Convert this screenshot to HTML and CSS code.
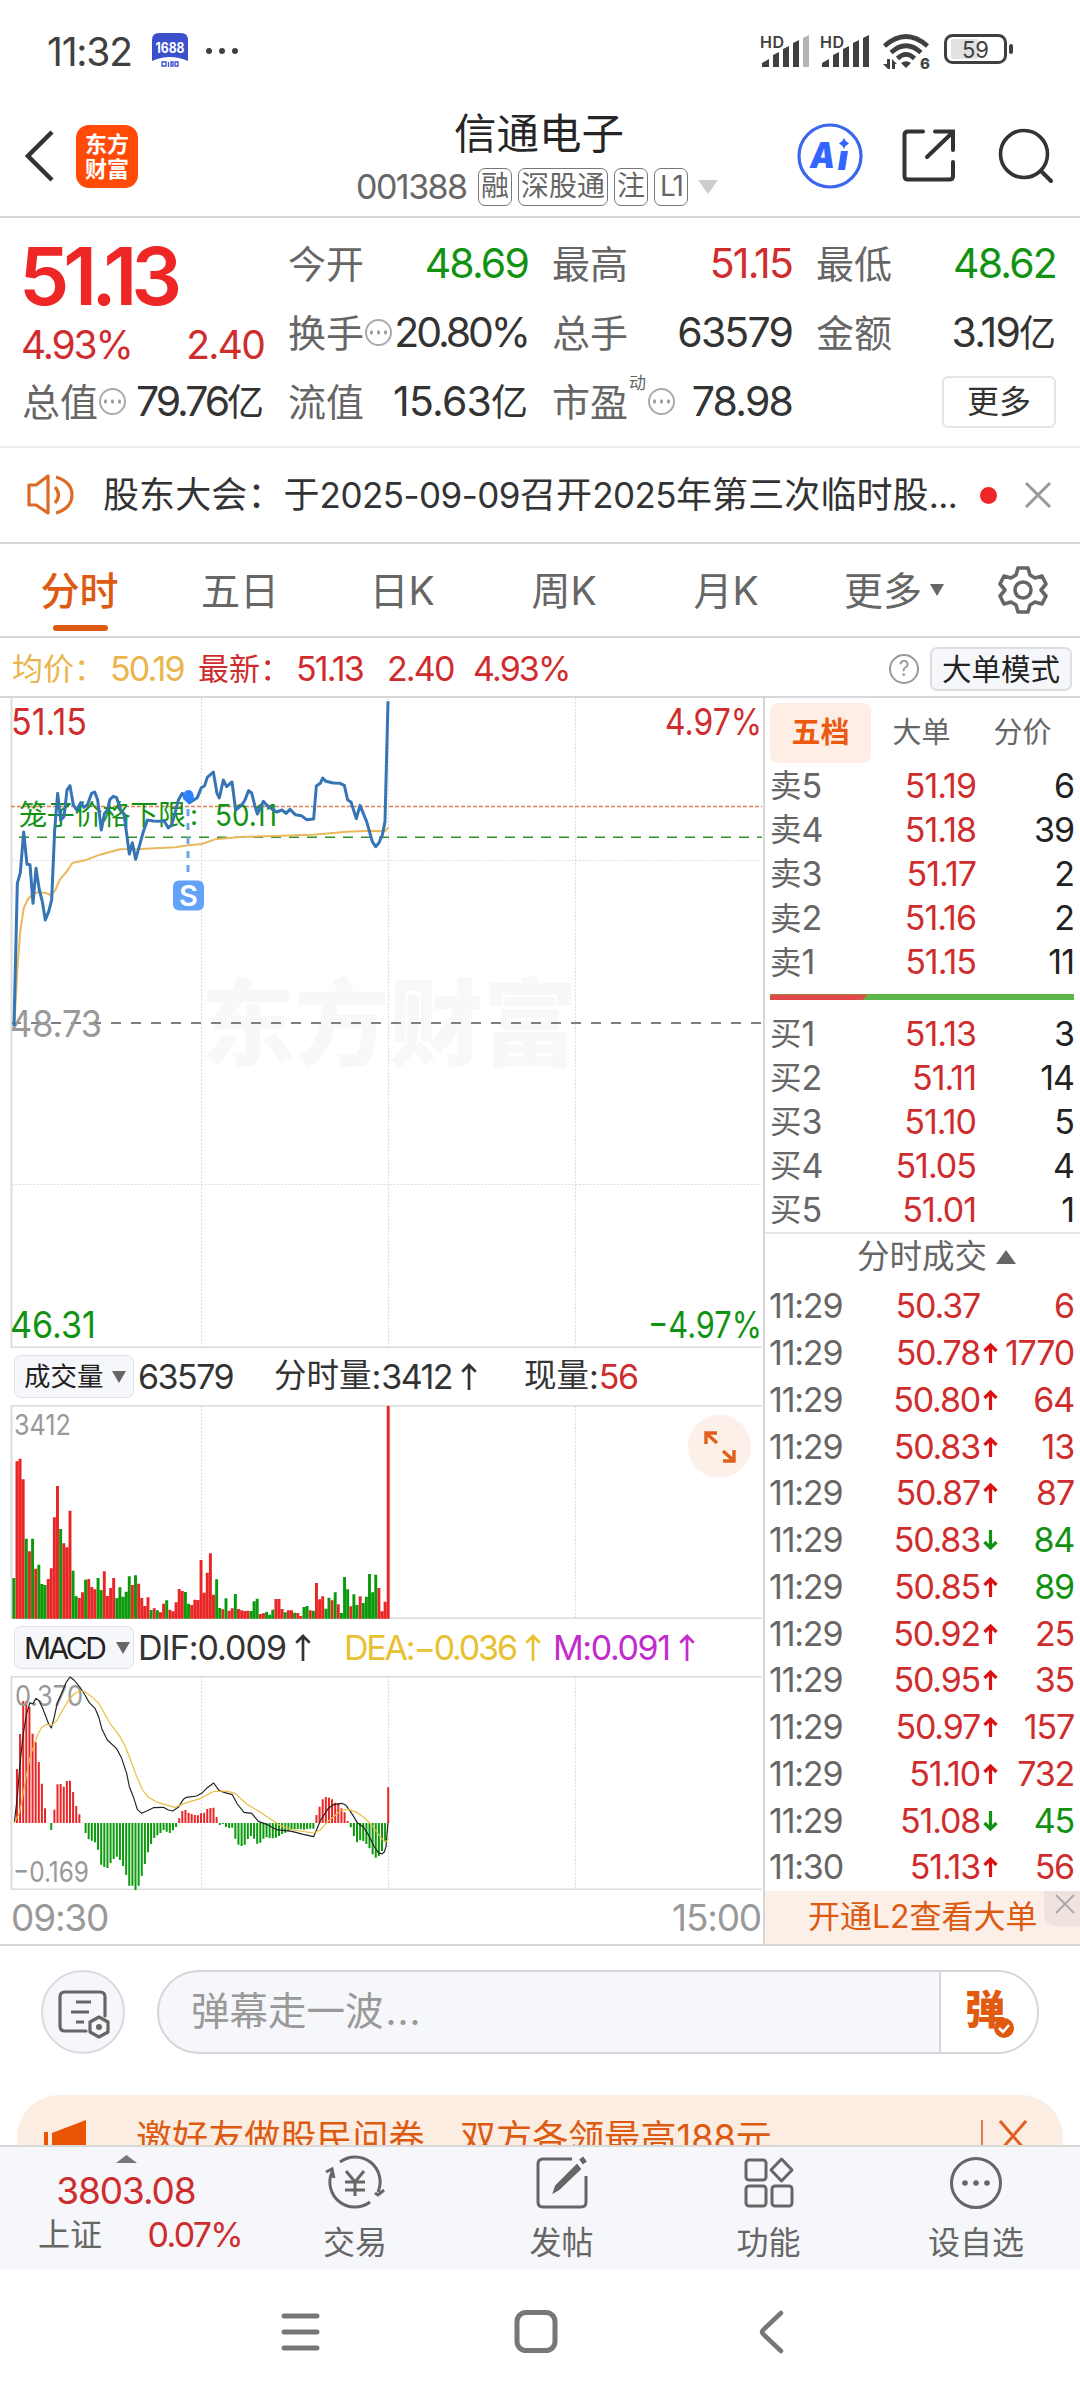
FILE: index.html
```html
<!DOCTYPE html>
<html lang="zh-CN">
<head>
<meta charset="utf-8">
<title>信通电子 001388</title>
<link rel="stylesheet" href="styles.css">
</head>
<body>
<div class="status">
  <span class="clock">11:32</span>
  <svg class="app1688" width="36" height="36" viewBox="0 0 36 36"><path d="M0 28V7Q0 0 7 0H29Q36 0 36 7V28Q18 20 0 28Z" fill="#3d50cc"/><text x="18" y="20" text-anchor="middle" textLength="29" lengthAdjust="spacingAndGlyphs" font-size="14" font-weight="700" fill="#fff">1688</text><path d="M10 29h4v4h-4zM16.500 29v5M19 29h2v4h-2zM23 29h3v4h-3z" fill="none" stroke="#3d50cc" stroke-width="1.300"/></svg>
  <span class="dots"><i></i><i></i><i></i></span>
  <svg class="signals" width="260" height="40" viewBox="0 0 260 40">
    <g fill="#404040">
      <g font-size="16" font-weight="600"><text x="0" y="13.500" textLength="24">HD</text><text x="60" y="13.500" textLength="24">HD</text></g>
      <path id="sig" d="M2 33V29L9 25V33ZM13 33V21L19 18V33ZM23 33V15L29 12V33ZM33 33V9L39 6V33Z"/>
      <path d="M43 33V4L49 1V33Z" fill="#b4b4b4"/>
      <use href="#sig" x="60"/><path d="M103 33V4L109 1V33Z"/>
      <path d="M146 34l-5-5q5-3.500 10 0z"/>
      <g fill="none" stroke="#404040" stroke-width="4.600"><path d="M124.500 12Q146-7 167.500 12"/><path d="M131 18.500Q146 5 161 18.500"/><path d="M137.500 24.500Q146 16 154.500 24.500"/></g>
      <path d="M123 30h4v-5h3v10h-2zM132 35V25l5 5h-2v5z"/>
      <text x="160" y="35" font-size="15" font-weight="800">6</text>
      <rect x="191" y="5" width="28" height="20" rx="3" fill="#e1e1e1"/>
      <rect x="185.500" y="1.500" width="60" height="27" rx="7" fill="none" stroke="#404040" stroke-width="3"/>
      <rect x="249" y="10" width="4" height="10" rx="2"/>
      <text x="202" y="24" font-size="23" textLength="27" lengthAdjust="spacingAndGlyphs">59</text>
    </g>
  </svg>
</div>

<header class="header">
  <svg class="back" width="30" height="52" viewBox="0 0 30 52"><path d="M27 2L3 26L27 50" fill="none" stroke="#333" stroke-width="4.500"/></svg>
  <div class="logo"><b>东方</b><b>财富</b></div>
  <div class="title">
    <h1>信通电子</h1>
    <div class="code"><span class="num">001388</span><em>融</em><em>深股通</em><em>注</em><em class="l1">L1</em><svg width="20" height="14" viewBox="0 0 20 14"><path d="M0 0H20L10 14Z" fill="#ccc"/></svg></div>
  </div>
  <svg class="ai" width="66" height="66" viewBox="0 0 66 66"><circle cx="33" cy="33" r="31" fill="none" stroke="#3b66f0" stroke-width="3.200"/><text x="13" y="45" font-size="36" font-weight="900" font-style="italic" textLength="25" lengthAdjust="spacingAndGlyphs" fill="#3366ff">A</text><path d="M44 28H51L48 47H41Z" fill="#3366ff"/><path d="M47 15Q48.500 19 52 20.500Q48.500 22 47 26Q45.500 22 42 20.500Q45.500 19 47 15Z" fill="#3366ff"/></svg>
  <svg class="share" width="54" height="54" viewBox="0 0 54 54"><path d="M21 2.500H6Q2.500 2.500 2.500 6V47Q2.500 50.500 6 50.500H47.500Q51 50.500 51 47V33M33 2.500H51V21M51 3L25 28" fill="none" stroke="#333" stroke-width="4" stroke-linecap="round"/></svg>
  <svg class="search" width="56" height="56" viewBox="0 0 56 56"><circle cx="26" cy="26" r="23.500" fill="none" stroke="#333" stroke-width="3.600"/><path d="M43 43L53 53" stroke="#333" stroke-width="4" stroke-linecap="round"/></svg>
</header>

<section class="quote">
  <div class="col main">
    <div class="big">51.13</div>
    <div class="cell chg"><span class="red num">4.93%</span><span class="red num">2.40</span></div>
    <div class="cell"><span class="lb">总值</span><i class="tip"></i><span class="num tight">79.76<u>亿</u></span></div>
  </div>
  <div class="col">
    <div class="cell"><span class="lb">今开</span><span class="num green">48.69</span></div>
    <div class="cell"><span class="lb">换手</span><i class="tip"></i><span class="num tight">20.80%</span></div>
    <div class="cell"><span class="lb">流值</span><span class="num loose">15.63<u>亿</u></span></div>
  </div>
  <div class="col">
    <div class="cell"><span class="lb">最高</span><span class="num red">51.15</span></div>
    <div class="cell"><span class="lb">总手</span><span class="num">63579</span></div>
    <div class="cell"><span class="lb">市盈</span><sup>动</sup><i class="tip"></i><span class="num">78.98</span></div>
  </div>
  <div class="col">
    <div class="cell"><span class="lb">最低</span><span class="num green">48.62</span></div>
    <div class="cell"><span class="lb">金额</span><span class="num">3.19<u>亿</u></span></div>
    <div class="cell"><span class="more">更多</span></div>
  </div>
</section>

<section class="notice">
  <svg width="48" height="42" viewBox="0 0 48 42"><g fill="none" stroke="#dc6a22" stroke-width="3.200" stroke-linejoin="round"><path d="M2 11H9L21 2V39L9 31H2Z"/><path d="M28 13Q35 21 28 29M29 3Q45 8 45 21Q45 34 29 39"/></g></svg>
  <p>股东大会：于<span>2025-09-09</span>召开<span>2025</span>年第三次临时股<span>...</span></p>
  <i class="dot"></i>
  <svg width="28" height="28" viewBox="0 0 28 28"><path d="M2 2L26 26M26 2L2 26" stroke="#999" stroke-width="3"/></svg>
</section>

<nav class="tabs">
  <span class="on">分时</span><span>五日</span><span>日K</span><span>周K</span><span>月K</span>
  <span class="mr">更多<svg width="14" height="12" viewBox="0 0 14 12"><path d="M0 0H14L7 12Z" fill="#666"/></svg></span>
  <span><svg width="50" height="50" viewBox="0 0 50 50"><g fill="none" stroke="#666" stroke-width="3.600" stroke-linejoin="round"><path d="M20 3H30L32 10L37 13L44 11L48 19L43 25L48 31L44 39L37 37L32 40L30 47H20L18 40L13 37L6 39L2 31L7 25L2 19L6 11L13 13L18 10Z"/><circle cx="25" cy="25" r="8"/></g></svg></span>
</nav>

<div class="avg">
  <span class="gold">均价：</span><span class="gold num a1">50.19</span>
  <span class="red">最新：</span><span class="red num a2">51.13</span><span class="red num a3">2.40</span><span class="red num a4">4.93%</span>
  <span class="help">?</span><span class="mode">大单模式</span>
</div>

<main class="board">
  <div class="charts">
    <svg class="price" width="764" height="651" viewBox="0 697 764 651">
      <g class="mark"><text x="201" y="1059" font-size="95" textLength="376" lengthAdjust="spacingAndGlyphs">东方财富</text></g>
      <g class="grid"><path d="M201.500 698V1347M388.500 698V1347M575.500 698V1347M12 860.500H762M12 1184.500H762"/></g>
      <path class="frame" d="M11.500 697V1347.500H762"/>
      <path d="M11 806.500H762" stroke="#d9825c" stroke-width="1.300" stroke-dasharray="4 2"/>
      <path d="M19 837.300H762" stroke="#2f922f" stroke-width="1.500" stroke-dasharray="10 8"/>
      <path d="M12 1023H762" stroke="#808080" stroke-width="2" stroke-dasharray="10 10" stroke-dashoffset="1"/>
      <text x="19" y="825" font-size="28" fill="#129212" textLength="167" class="cn">笼子价格下限</text><text x="190" y="825" font-size="28" fill="#129212">:</text>
      <text x="215" y="826" font-size="30" fill="#129212" textLength="62" lengthAdjust="spacingAndGlyphs">50.11</text>
      <text x="11" y="735" font-size="37" fill="#cf2d2d" textLength="76" lengthAdjust="spacingAndGlyphs">51.15</text>
      <text x="665" y="735" font-size="37" fill="#cf2d2d" textLength="97" lengthAdjust="spacingAndGlyphs">4.97%</text>
      <text x="10" y="1037" font-size="37" fill="#999" textLength="92" lengthAdjust="spacingAndGlyphs">48.73</text>
      <text x="10" y="1338" font-size="37" fill="#129212" textLength="86" lengthAdjust="spacingAndGlyphs">46.31</text>
      <text x="648" y="1338" font-size="37" fill="#129212" textLength="114" lengthAdjust="spacingAndGlyphs">−4.97%</text>
      <g transform="translate(0,690) scale(.33333)" fill="none" stroke-linejoin="round">
        <path stroke="#eab85c" stroke-width="6" d="M44 990L52 840L60 730L71 655L82 630L95 615L112 607L135 608L152 615L165 602L180 568L200 545L217 519L255 511L300 494L360 478L420 477L525 472L566 466L605 462L645 448L720 441L820 438L940 434L1040 425L1110 422L1155 424L1165 412"/>
        <path stroke="#3574b5" stroke-width="9" d="M42 1008L52 580L61 548L71 426L81 523L90 524L99 640L108 535L118 600L127 635L136 690L146 665L155 630L164 420L173 310L182 390L192 380L201 300L210 287L220 345L230 360L242 338L252 352L262 345L275 310L284 306L293 330L304 420L313 372L322 360L330 328L340 319L350 323L362 360L372 372L388 492L397 458L407 508L430 425L442 390L460 393L480 394L492 392L505 414L515 405L525 370L535 330L547 310L557 325L568 338L592 323L604 293L614 287L622 262L640 246L651 310L658 324L670 270L680 290L696 276L707 360L720 350L733 334L746 302L755 309L764 345L772 372L790 334L800 345L815 356L830 366L846 360L858 370L870 358L886 374L904 377L920 389L941 387L949 288L961 280L968 264L978 274L1000 279L1020 280L1033 286L1043 330L1053 336L1069 386L1080 346L1100 395L1117 455L1127 470L1137 458L1147 435L1155 395L1164 34"/>
      </g>
      <path d="M188 809V875" stroke="#6ba5ea" stroke-width="3" stroke-dasharray="7 7"/>
      <path d="M188.500 804L183 799Q183 790 188.500 790Q194 790 194 799Z" fill="#2f80ff"/>
      <rect x="173" y="880.500" width="31" height="30" rx="6" fill="#62a2f8"/><text x="188.500" y="906" font-size="29" font-weight="600" text-anchor="middle" fill="#fff">S</text>
    </svg>

    <div class="metrics vol">
      <span class="pill">成交量<svg width="14" height="12" viewBox="0 0 14 12"><path d="M0 0H14L7 12Z" fill="#666"/></svg></span>
      <span class="num">63579</span><span class="m2"><b>分时量</b>:<span class="num">3412</span><svg class="ar"><use href="#up"/></svg></span><span class="m3"><b>现量</b>:<span class="num red">56</span></span>
    </div>

    <div class="plot">
      <svg width="764" height="214" viewBox="0 1405 764 214">
        <g class="grid"><path d="M201.500 1406V1618M388.500 1406V1618M575.500 1406V1618"/></g>
        <path class="frame" d="M11.500 1405.500V1618.500H762M11 1405.500H762"/>
        <text x="14" y="1435" font-size="29" fill="#999" textLength="57" lengthAdjust="spacingAndGlyphs">3412</text>
        <g transform="translate(0,1340) scale(.33333)"><path id="volUp" class="up"/><path id="volDown" class="down"/></g>
      </svg>
      <span class="expand"><svg width="32" height="32" viewBox="0 0 32 32"><path d="M2 13V2H13M2 2L13 12M30 19V30H19M30 30L19 20" fill="none" stroke="#e0601c" stroke-width="3.400"/></svg></span>
    </div>

    <div class="metrics macd">
      <span class="pill">MACD<svg width="14" height="12" viewBox="0 0 14 12"><path d="M0 0H14L7 12Z" fill="#666"/></svg></span>
      <span class="d1">DIF:0.009<svg class="ar"><use href="#up"/></svg></span><span class="d2">DEA:−0.036<svg class="ar"><use href="#up"/></svg></span><span class="d3">M:0.091<svg class="ar"><use href="#up"/></svg></span>
    </div>

    <svg width="764" height="214" viewBox="0 1676 764 214">
      <g class="grid"><path d="M201.500 1677V1889M388.500 1677V1889M575.500 1677V1889"/></g>
      <path class="frame" d="M11.500 1676.500V1889.500H762M11 1676.500H762"/>
      <g transform="translate(0,1600) scale(.33333)"><path id="macdUp" class="up"/><path id="macdDown" class="down"/></g>
      <text x="15" y="1706" font-size="29" fill="#999" textLength="68" lengthAdjust="spacingAndGlyphs">0.370</text>
      <text x="13" y="1882" font-size="29" fill="#999" textLength="76" lengthAdjust="spacingAndGlyphs">−0.169</text>
      <g transform="translate(0,1600) scale(.33333)" fill="none" stroke-width="3.500" stroke-linejoin="round">
        <path stroke="#222" d="M43 668L52 590L60 490L70 400L80 340L90 308L98 312L108 295L118 303L128 325L137 348L146 372L154 384L162 355L172 308L185 280L198 248L210 231L222 240L240 262L255 285L268 308L285 325L296 350L306 388L322 420L350 446L365 475L380 520L388 560L400 590L412 628L425 640L440 633L460 623L490 622L505 630L518 633L535 622L550 598L560 592L590 588L605 580L622 563L641 549L657 571L675 578L697 584L712 612L732 637L755 640L775 664L800 673L830 689L875 694L910 703L941 710L962 660L985 625L1000 614L1025 610L1038 616L1055 640L1072 668L1090 681L1105 704L1122 738L1135 758L1145 762L1153 756L1158 740L1164 668"/>
        <path stroke="#e9bd3c" d="M43 668L58 640L68 590L80 520L92 465L110 412L125 382L140 373L155 376L170 362L188 330L205 302L222 282L240 273L255 275L275 290L296 310L330 370L360 410L375 437L392 480L410 530L428 570L445 592L475 608L525 622L560 608L600 596L642 574L680 573L705 580L740 612L775 633L810 656L840 676L880 690L940 699L960 691L980 668L1000 651L1025 630L1045 628L1070 637L1095 655L1115 675L1135 702L1150 722L1160 724L1164 716"/>
      </g>
    </svg>
    <div class="times"><span>09:30</span><span>15:00</span></div>
  </div>

  <aside class="side">
    <div class="stabs"><span class="on">五档</span><span>大单</span><span>分价</span></div>
    <div class="book" id="asks"></div>
    <div class="ratio"><i></i></div>
    <div class="book" id="bids"></div>
    <div class="dealhead">分时成交<svg width="20" height="14" viewBox="0 0 20 14"><path d="M0 14H20L10 0Z" fill="#666"/></svg></div>
    <div class="deals" id="deals"></div>
    <div class="l2">开通L2查看大单<span class="x"><svg width="20" height="20" viewBox="0 0 20 20"><path d="M1 1L19 19M19 1L1 19" stroke="#aaa" stroke-width="2"/></svg></span></div>
  </aside>
</main>

<section class="danmu">
  <span class="set"><svg width="54" height="54" viewBox="0 0 54 54"><g fill="none" stroke="#666" stroke-width="3.200"><path d="M48 28V9Q48 4 43 4H8Q3 4 3 9V38Q3 43 8 43H29" stroke-linecap="round"/><path d="M19 14H34M14 24H32M19 34H27"/><path d="M42 29L51 34V44L42 49L33 44V34Z" stroke-linejoin="round"/></g><circle cx="42" cy="39" r="3" fill="#666"/></svg></span>
  <div class="input"><span>弹幕走一波<small>...</small></span><b>弹<svg width="20" height="20" viewBox="0 0 20 20"><circle cx="10" cy="10" r="10" fill="#e05a10"/><path d="M5 10L9 14L15 7" fill="none" stroke="#fff" stroke-width="2.500"/></svg></b></div>
</section>

<section class="promo"><div class="strip">
  <svg width="42" height="34" viewBox="0 0 42 34"><path d="M0 13H4V34H0ZM8 14L42 1V34H8Z" fill="#ea5504"/></svg>
  <p>邀好友做股民问卷</p><p class="p2">双方各领最高188元</p>
  <i></i><svg class="pc" width="28" height="40" viewBox="0 0 28 40"><path d="M1 2L27 32M27 2L1 32" stroke="#e06020" stroke-width="3"/></svg>
</div></section>

<nav class="bottom">
  <div class="index"><svg width="21" height="8" viewBox="0 0 21 8"><path d="M0 8H21L10.500 0Z" fill="#777"/></svg><strong class="num">3803.08</strong><div><span>上证</span><span class="num red">0.07%</span></div></div>
  <div class="item"><svg width="62" height="56" viewBox="0 0 62 56"><g fill="none" stroke="#666" stroke-width="3"><path d="M16 8A25 25 0 0 1 54 38M46 48A25 25 0 0 1 8 18M2 18L8 15L10 24M51 39L54 41L60 36"/><path d="M22 17L31 28L40 17M31 28V42M21 28H41M21 36H41"/></g></svg><span>交易</span></div>
  <div class="item"><svg width="54" height="56" viewBox="0 0 54 56"><path d="M37 5H8Q3 5 3 10V48Q3 53 8 53H46Q51 53 51 48V22" fill="none" stroke="#666" stroke-width="3"/><path d="M42 11L45 15L24 35L19 38L21 32Z" fill="#666" stroke="#666" stroke-width="2"/><path d="M46 8L50 5" stroke="#666" stroke-width="6"/></svg><span>发帖</span></div>
  <div class="item"><svg width="54" height="56" viewBox="0 0 54 56"><g fill="none" stroke="#666" stroke-width="3"><rect x="4" y="6" width="20" height="20" rx="3"/><rect x="4" y="32" width="20" height="20" rx="3"/><rect x="30" y="32" width="20" height="20" rx="3"/><path d="M39.500 5L50 16L39.500 27L29 16Z" stroke-linejoin="round"/></g></svg><span>功能</span></div>
  <div class="item"><svg width="54" height="56" viewBox="0 0 54 56"><circle cx="27" cy="29" r="24.500" fill="none" stroke="#666" stroke-width="3"/><g fill="#666"><circle cx="16" cy="29" r="2.800"/><circle cx="27" cy="29" r="2.800"/><circle cx="38" cy="29" r="2.800"/></g></svg><span>设自选</span></div>
</nav>

<footer class="sys">
  <svg width="540" height="44" viewBox="0 0 540 44"><g fill="none" stroke="#777" stroke-width="5" stroke-linecap="round"><path d="M14 6H47M14 22H47M14 38H47"/><rect x="247" y="2.500" width="38" height="38" rx="9"/><path d="M511 3L493 20Q491 22 493 24L511 41" stroke-width="4.500"/></g></svg>
</footer>

<svg width="0" height="0" class="defs"><defs><symbol id="up" viewBox="0 0 16 28"><path d="M8 28V2M1 9L8 2L15 9" fill="none" stroke="currentColor" stroke-width="2.800"/></symbol></defs></svg>
<script src="chart.js"></script>
</body>
</html>
```
FILE: styles.css
```css
* { box-sizing: border-box; }
body { margin: 0; width: 1080px; height: 2400px; overflow: hidden; background: #fff; color: #333; font-family: Inter, "Noto Sans CJK SC", sans-serif; font-size: 34px; line-height: 1; display: flex; flex-direction: column; }
i, em, u { font-style: normal; text-decoration: none; }
b { font-weight: inherit; }
svg { flex: none; display: block; }
h1, p { margin: 0; font-weight: 400; white-space: nowrap; }
.num { letter-spacing: -0.045em; }
.red { color: #cf2d2d; }
.green { color: #129212; }
.gold { color: #eab54c; }
.defs { position: absolute; }

.status { height: 100px; display: flex; align-items: center; padding: 2px 0 0 47px; flex: none; color: #404040; }
.clock { font-size: 39px; letter-spacing: -1.200px; width: 105px; white-space: nowrap; }
.app1688 { overflow: visible; }
.dots { display: flex; gap: 7px; margin-left: 18px; }
.dots i { width: 6px; height: 6px; border-radius: 50%; background: #404040; }
.signals { margin: 5px 0 0 522px; }

.header { height: 118px; flex: none; display: flex; border-bottom: 2px solid #d8d8d8; position: relative; }
.back { margin: 30px 0 0 25px; }
.logo { width: 62px; height: 63px; margin: 25px 0 0 21px; border-radius: 13px; background: #ff4a08; color: #fff; display: flex; flex-direction: column; align-items: center; justify-content: center; gap: 3px; font-size: 22px; font-weight: 700; }
.title { width: 362px; margin-left: 218px; }
.title h1 { font-size: 42.500px; margin: 13px 0 0 98px; height: 55px; color: #262626; }
.code { display: flex; align-items: center; gap: 6px; color: #666; height: 38px; }
.code .num { font-size: 34px; width: 117px; }
.code em { border: 1.500px solid #777; border-radius: 7px; height: 38px; line-height: 34px; font-size: 28px; padding: 0 2px; white-space: nowrap; width: 34px; text-align: center; flex: none; }
.code em:nth-of-type(2) { width: 90px; }
.code .l1 { letter-spacing: -2px; }
.code svg { margin-left: 4px; }
.ai { margin: 23px 0 0 79px; }
.share { margin: 29px 0 0 39px; }
.search { margin: 28px 0 0 42px; }

.quote { height: 230px; flex: none; border-bottom: 2px solid #ececec; display: grid; grid-template-columns: 242px 240px 240px 240px; column-gap: 24px; padding: 11px 0 0 22px; }
.col { display: grid; grid-template-rows: 69px 69px 69px; }
.main { grid-template-rows: 93px 45px 69px; }
.cell { display: flex; align-items: center; font-size: 41px; white-space: nowrap; }
.cell .lb { font-size: 38px; color: #666; }
.cell .num { margin-left: auto; }
.cell .tight { letter-spacing: -0.075em; }
.cell .loose { letter-spacing: -0.020em; }
.cell u { font-size: 37px; letter-spacing: 0; }
.cell.chg .num { font-size: 39px; }
.cell.chg .num:first-child { margin-left: -1px; letter-spacing: -0.055em; }
.big { font-size: 80px; font-weight: 600; color: #ef2626; letter-spacing: -6px; line-height: 93px; margin-left: -3px; }
.tip { width: 27px; height: 27px; border: 2px solid #aaa; border-radius: 50%; background: radial-gradient(circle, #999 1.600px, transparent 2px) center / 7px 8px; background-clip: content-box; padding: 8px 1px 7px; flex: none; margin-left: 1px; }
.cell sup { font-size: 17px; line-height: 1; color: #666; align-self: flex-start; margin: 8px 1px 0 1px; }
.more { margin-left: auto; width: 114px; height: 52px; border: 2px solid #e4e4e4; border-radius: 6px; font-size: 32px; display: flex; align-items: center; justify-content: center; }

.notice { height: 96px; flex: none; border-bottom: 2px solid #d8d8d8; display: flex; align-items: center; padding-left: 27px; }
.notice p { font-size: 36px; margin-left: 28px; width: 877px; letter-spacing: 0.100px; }
.notice p span { font-size: 35px; letter-spacing: -0.550px; }
.notice .dot { width: 17px; height: 17px; border-radius: 50%; background: #ef2626; margin-right: 27px; }

.tabs { height: 94px; flex: none; border-bottom: 2px solid #d8d8d8; display: grid; grid-template-columns: 159px 162px 162px 162px 162px 174px 84px; font-size: 39px; color: #666; }
.tabs span { display: flex; align-items: center; justify-content: center; position: relative; }
.tabs .on { color: #dd5a12; font-weight: 500; }
.tabs .on::after { content: ""; position: absolute; left: 53px; top: 81px; width: 55px; height: 6px; border-radius: 3px; background: #dd5a12; }
.mr svg { margin-left: 8px; }

.avg { height: 60px; flex: none; border-bottom: 2px solid #d8d8d8; display: flex; align-items: center; font-size: 31px; padding: 3px 8px 0 12px; white-space: nowrap; }
.avg .num { font-size: 34px; letter-spacing: -0.055em; }
.a1 { width: 88px; margin-left: 5px; }
.a2 { margin-left: 5px; width: 91px; }
.a3 { width: 86px; }
.help { width: 30px; height: 30px; border: 2.500px solid #999; border-radius: 50%; font-size: 21px; color: #999; margin-left: auto; text-align: center; line-height: 25px; }
.mode { width: 142px; height: 44px; border: 2px solid #dcdee2; border-radius: 7px; background: #f6f7fa; color: #222; margin-left: 11px; font-size: 29.500px; text-align: center; line-height: 40px; }

.board { height: 1248px; flex: none; display: flex; border-bottom: 2px solid #d8d8d8; }
.charts { width: 765px; flex: none; border-right: 2px solid #d5d5d5; margin-top: -1px; }
.charts svg text { font-family: Inter, "Noto Sans CJK SC", sans-serif; }
.charts svg .mark text { font-weight: 900; fill: #f8f8f8; }
.grid path { stroke: #ddd; stroke-width: 1.200; stroke-dasharray: 2 1.500; fill: none; }
.frame { stroke: #dcdcdc; stroke-width: 2; fill: none; }
.up { fill: #e92525; }
.down { fill: #0b9a0b; }
.metrics { height: 57px; display: flex; align-items: center; padding-left: 14px; white-space: nowrap; font-size: 34px; }
.pill { width: 120px; height: 43px; border: 1.500px solid #dfe2e6; border-radius: 7px; background: #f6f7fa; color: #222; font-size: 26.500px; display: flex; align-items: center; padding-left: 9px; flex: none; margin-right: 4px; }
.pill svg { margin-left: 8px; }
.macd .pill { font-size: 30px; letter-spacing: -2.500px; }
.macd .pill svg { margin-left: 12px; }
.vol b { font-size: 32.500px; }
.vol > .num { width: 136px; }
.metrics span span, .m2, .m3 { display: flex; align-items: center; }
.m2 { width: 250px; }
.metrics .ar { width: 16px; height: 27px; margin-left: 9px; }
.d1, .d2, .d3 { display: flex; align-items: center; letter-spacing: -1px; }
.d1 { width: 206px; }
.d2 { width: 209px; color: #e8c130; letter-spacing: -2.200px; }
.d3 { color: #c22ccc; letter-spacing: -1.400px; }
.plot { position: relative; }
.expand { position: absolute; left: 688px; top: 10px; width: 63px; height: 63px; border-radius: 50%; background: #fdf0e9; display: flex; align-items: center; justify-content: center; }
.times { height: 54px; display: flex; justify-content: space-between; align-items: center; padding: 0 2px 0 11px; font-size: 37px; color: #999; letter-spacing: -1.200px; }

.side { flex: 1; display: flex; flex-direction: column; min-width: 0; }
.stabs { height: 66px; flex: none; display: flex; padding: 5px 0 0 5px; font-size: 29px; color: #666; }
.stabs span { width: 101px; height: 60px; display: flex; align-items: center; justify-content: center; padding-bottom: 1px; }
.stabs .on { background: #feeee6; color: #ea5a10; font-weight: 700; border-radius: 8px; }
.book div { display: flex; height: 44.100px; align-items: center; padding: 0 6px 0 5px; font-size: 35px; white-space: nowrap; }
.book .k { color: #666; font-size: 31.500px; width: 76px; display: flex; align-items: center; }
.book .k span { font-size: 34px; }
.book .p { color: #cf2d2d; width: 130px; text-align: right; font-size: 34px; letter-spacing: -1px; }
.book .v { color: #222; margin-left: auto; font-size: 34px; letter-spacing: -1px; }
.ratio { height: 6px; flex: none; margin: 10px 6px 11px 5px; background: #5db54a; }
.ratio i { display: block; height: 6px; width: 98px; background: #e24a4a; clip-path: polygon(0 0, 100% 0, 94% 100%, 0 100%); }
.dealhead { height: 51px; flex: none; border-top: 2px solid #e6e6e6; display: flex; align-items: center; padding: 0 0 3px 92px; gap: 9px; font-size: 32.500px; color: #666; }
.deals div { display: flex; height: 46.750px; align-items: center; padding: 0 6px 0 4px; font-size: 34px; white-space: nowrap; }
.deals .t { color: #666; letter-spacing: -1.200px; width: 96px; }
.deals .p { color: #cf2d2d; width: 115px; text-align: right; letter-spacing: -1.200px; }
.deals .v { margin-left: auto; letter-spacing: -1.200px; }
.deals .ar2 { width: 15px; height: 22px; margin-left: 3px; }
.l2 { flex: 1; background: #fcefe8; color: #dd5a12; font-size: 32px; display: flex; align-items: center; padding: 0 0 0 43px; position: relative; }
.l2 .x { position: absolute; right: 0; top: 0; width: 36px; height: 35px; background: #eee3de; border-bottom-left-radius: 12px; display: flex; align-items: center; justify-content: center; padding: 0 0 8px 6px; }

.danmu { height: 149px; flex: none; display: flex; padding: 24px 0 0 41px; }
.set { width: 84px; height: 84px; border: 2px solid #d9dbe0; border-radius: 50%; background: #f6f7fa; display: flex; align-items: center; justify-content: center; padding: 5px 0 0 1px; }
.input { width: 882px; height: 84px; margin-left: 32px; border: 2px solid #d4d6da; border-radius: 42px; background: #f6f7fa; display: flex; overflow: hidden; }
.input span { flex: 1; padding-left: 32px; font-size: 38.500px; color: #999; line-height: 78px; }
.input small { font-size: 38px; letter-spacing: 1px; margin-left: 2px; }
.input b { width: 98px; background: #fff; border-left: 2px solid #d4d6da; color: #e05a10; font-weight: 900; font-size: 40px; line-height: 76px; padding-left: 24px; position: relative; }
.input b svg { position: absolute; left: 53px; top: 46px; }

.promo { height: 50px; flex: none; overflow: hidden; padding: 0 17px; }
.strip { height: 84px; border-radius: 42px; background: #fcede3; display: flex; padding: 24px 0 0 27px; color: #dd5a12; font-size: 36.100px; }
.strip p { margin: 0 0 0 50px; width: 289px; line-height: 38px; }
.strip .p2 { margin-left: 35px; width: 521px; }
.strip i { width: 2px; height: 30px; background: #e08050; margin-top: 1px; margin-left: 0; }
.pc { margin-left: 16px; }

.bottom { height: 125px; flex: none; background: #f6f7fa; border-top: 2px solid #d8d8d8; display: grid; grid-template-columns: 252px 206px 207px 207px 208px; color: #666; }
.index { display: flex; flex-direction: column; align-items: center; padding-top: 8px; }
.index strong { font-weight: 400; color: #cf2d2d; margin-top: 9px; height: 46px; line-height: 37px; }
.index div { display: flex; width: 204px; justify-content: space-between; font-size: 32px; align-items: center; margin-left: 28px; }
.index .num { font-size: 34px; }
.index div .num { letter-spacing: -0.050em; }
.index strong.num { font-size: 37px; letter-spacing: -0.030em; }
.item { display: flex; flex-direction: column; align-items: center; padding-top: 7px; font-size: 32px; }
.item span { margin-top: 17px; }

.sys { flex: 1; display: flex; justify-content: center; align-items: flex-start; padding-top: 40px; }
```
FILE: chart.js
```js
// One bar per minute; minus sign marks a falling bar, values are bar tops on a 3x grid.
const STEP = 9.36, X0 = 41.5;
const volume = [-714,364,356,418,-596,634,-596,686,-674,-732,-735,717,685,532,438,-567,610,622,512,-692,-769,774,757,-719,717,741,748,-714,-750,694,768,744,714,-774,-742,-770,-755,-709,735,-706,731,774,798,772,-810,805,-811,817,791,-781,809,814,787,747,753,-756,-791,795,779,780,660,758,698,640,764,-718,-804,808,-775,812,805,-762,807,811,813,812,-813,-784,-776,822,820,-816,-824,-809,777,777,807,-817,811,811,-818,819,828,-801,-798,811,-812,729,778,769,-806,-773,781,-757,793,-819,-711,-748,799,-763,-795,769,-789,-770,-702,-757,-704,744,814,785,198];
const macd = [669,507,402,303,303,321,401,426,486,551,625,669,690,629,553,552,560,543,542,576,618,643,668,699,718,722,727,749,794,801,804,789,777,770,780,798,825,857,857,870,857,828,792,757,732,714,706,699,690,695,699,691,681,655,633,630,638,642,645,646,640,638,627,624,623,651,675,672,681,684,683,716,734,738,734,717,708,716,731,728,716,712,714,715,713,708,702,698,692,690,688,687,688,689,687,686,686,645,620,598,591,593,598,608,610,625,637,663,682,708,727,721,723,732,745,763,773,768,753,725,562];
const bar = (i, top, bottom, w) => `M${(X0 + i * STEP - w / 2).toFixed(1)} ${top}h${w}V${bottom}h${-w}z`;
const put = (id, d) => document.getElementById(id).setAttribute('d', d);
let up = '', down = '';
volume.forEach((v, i) => { if (v > 0) up += bar(i, v, 836, 8.8); else down += bar(i, -v, 836, 8.8); });
put('volUp', up); put('volDown', down);
up = down = '';
macd.forEach((v, i) => { if (v < 669) up += bar(i, v, 669, 6); else if (v > 669) down += bar(i, 669, v, 6); });
put('macdUp', up); put('macdDown', down);

const book = (id, side, rows) => {
  document.getElementById(id).innerHTML = rows.map(([n, p, v]) =>
    `<div><span class="k">${side}<span>${n}</span></span><span class="p">${p}</span><span class="v">${v}</span></div>`).join('');
};
book('asks', '卖', [[5, '51.19', 6], [4, '51.18', 39], [3, '51.17', 2], [2, '51.16', 2], [1, '51.15', 11]]);
book('bids', '买', [[1, '51.13', 3], [2, '51.11', 14], [3, '51.10', 5], [4, '51.05', 4], [5, '51.01', 1]]);

const arrow = { u: ['#d11', 'M7 21V3M1 9L7 3L13 9'], d: ['#129212', 'M7 1V19M1 13L7 19L13 13'] };
const deals = [['11:29','50.37','',6,'red'],['11:29','50.78','u',1770,'red'],['11:29','50.80','u',64,'red'],['11:29','50.83','u',13,'red'],['11:29','50.87','u',87,'red'],['11:29','50.83','d',84,'green'],['11:29','50.85','u',89,'green'],['11:29','50.92','u',25,'red'],['11:29','50.95','u',35,'red'],['11:29','50.97','u',157,'red'],['11:29','51.10','u',732,'red'],['11:29','51.08','d',45,'green'],['11:30','51.13','u',56,'red']];
document.getElementById('deals').innerHTML = deals.map(([t, p, a, v, c]) =>
  `<div><span class="t">${t}</span><span class="p">${p}</span>` +
  (a ? `<svg class="ar2" viewBox="0 0 14 22"><path d="${arrow[a][1]}" fill="none" stroke="${arrow[a][0]}" stroke-width="3.2"/></svg>` : '') +
  `<span class="v ${c}">${v}</span></div>`).join('');
```
